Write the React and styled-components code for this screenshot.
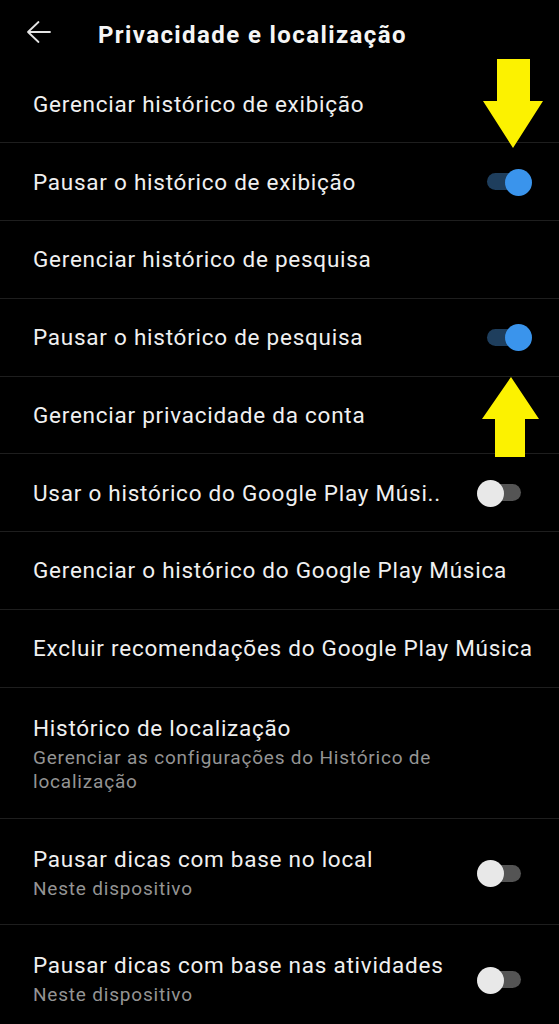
import React from 'react';
import styled, { createGlobalStyle } from 'styled-components';

const GlobalStyle = createGlobalStyle`
  html, body {
    margin: 0;
    padding: 0;
    background: #000;
  }
  body {
    font-family: Roboto, "Noto Sans", sans-serif;
    color: #f2f2f2;
    -webkit-font-smoothing: antialiased;
  }
`;

const Screen = styled.div`
  position: relative;
  width: 559px;
  height: 1024px;
  overflow: hidden;
  background: #000;
`;

const Header = styled.header`
  display: flex;
  align-items: center;
  height: 65.5px;
  padding-left: 26px;
  box-sizing: border-box;
`;

const BackButton = styled.button`
  display: flex;
  align-items: center;
  justify-content: center;
  width: 26px;
  height: 26px;
  padding: 0;
  margin: -2px 46px 0 0;
  border: 0;
  background: none;
  color: #e4e4e4;
`;

const Title = styled.h1`
  margin: 5px 0 0;
  font-size: 24px;
  font-weight: 700;
  color: #f5f5f5;
  letter-spacing: 1.4px;
`;

const List = styled.ul`
  list-style: none;
  margin: 0;
  padding: 0;
`;

const Row = styled.li`
  display: flex;
  align-items: center;
  justify-content: space-between;
  box-sizing: border-box;
  min-height: ${(p) => (p.$tall ? 'auto' : '77.75px')};
  padding: ${(p) => (p.$tall ? '27px 26px 23px 33px' : '0 26px 0 33px')};
  border-bottom: 1px solid #1e1e1e;
`;

const TextBlock = styled.div`
  display: flex;
  flex-direction: column;
  gap: 5px;
`;

const Label = styled.span`
  font-size: 22.5px;
  line-height: 26px;
  letter-spacing: 0.75px;
  color: #f0f0f0;
  white-space: nowrap;
`;

const Sub = styled.span`
  max-width: 440px;
  font-size: 19px;
  line-height: 24.5px;
  letter-spacing: 0.8px;
  color: #949494;
`;

const SwitchBox = styled.span`
  position: relative;
  flex: none;
  width: 56px;
  height: 28px;
`;

const Track = styled.span`
  position: absolute;
  left: 10px;
  right: 12px;
  top: 5.5px;
  height: 17px;
  border-radius: 9px;
  background: ${(p) => (p.$on ? '#1e3e5d' : '#545454')};
`;

const Thumb = styled.span`
  position: absolute;
  top: 1px;
  ${(p) => (p.$on ? 'right: 1px;' : 'left: 0;')}
  width: 27px;
  height: 27px;
  border-radius: 50%;
  background: ${(p) => (p.$on ? '#3a94ec' : '#e8e8e8')};
`;

const Marker = styled.svg`
  position: absolute;
  left: 480px;
  top: ${(p) => p.$top}px;
`;

const Switch = ({ on }) => (
  <SwitchBox>
    <Track $on={on} />
    <Thumb $on={on} />
  </SwitchBox>
);

const items = [
  { label: 'Gerenciar histórico de exibição' },
  { label: 'Pausar o histórico de exibição', toggle: true, on: true },
  { label: 'Gerenciar histórico de pesquisa' },
  { label: 'Pausar o histórico de pesquisa', toggle: true, on: true },
  { label: 'Gerenciar privacidade da conta' },
  { label: 'Usar o histórico do Google Play Músi..', toggle: true, on: false },
  { label: 'Gerenciar o histórico do Google Play Música' },
  { label: 'Excluir recomendações do Google Play Música' },
  {
    label: 'Histórico de localização',
    sub: 'Gerenciar as configurações do Histórico de localização',
  },
  { label: 'Pausar dicas com base no local', sub: 'Neste dispositivo', toggle: true, on: false },
  { label: 'Pausar dicas com base nas atividades', sub: 'Neste dispositivo', toggle: true, on: false },
];

export default function App() {
  return (
    <Screen>
      <GlobalStyle />
      <Header>
        <BackButton aria-label="Voltar">
          <svg width="26" height="24" viewBox="0 0 26 24" fill="none" stroke="currentColor" strokeWidth="1.8" strokeLinecap="round">
            <path d="M2 12h22M2 12l10.5-10M2 12l10.5 10" />
          </svg>
        </BackButton>
        <Title>Privacidade e localização</Title>
      </Header>
      <List>
        {items.map((item) => (
          <Row key={item.label} $tall={!!item.sub}>
            <TextBlock>
              <Label>{item.label}</Label>
              {item.sub && <Sub>{item.sub}</Sub>}
            </TextBlock>
            {item.toggle && <Switch on={item.on} />}
          </Row>
        ))}
      </List>

      <Marker $top={58} width="66" height="94" viewBox="0 0 66 94">
        <polygon points="17,1 50,1 50,43 63,43 33,90 3,43 17,43" fill="#fcf200" />
      </Marker>
      <Marker $top={375} width="66" height="84" viewBox="0 0 66 84">
        <polygon points="31,2 59,44 45,44 45,82 15,82 15,44 2,44" fill="#fcf200" />
      </Marker>
    </Screen>
  );
}
